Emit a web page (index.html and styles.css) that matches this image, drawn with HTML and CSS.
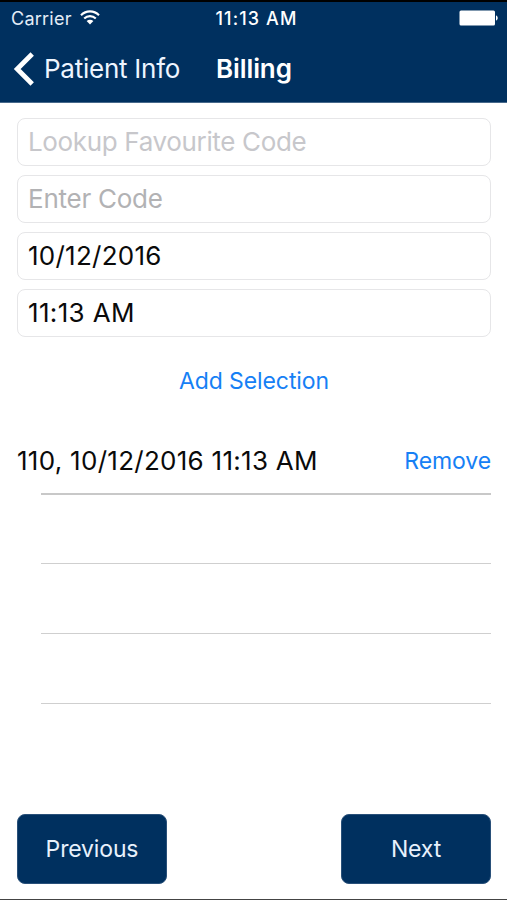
FILE: index.html
```html
<!DOCTYPE html>
<html lang="en">
<head>
<meta charset="utf-8">
<title>Billing</title>
<link rel="stylesheet" href="styles.css">
</head>
<body>
<div class="screen">
  <header class="header">
    <div class="status">
      <div class="carrier"><span class="carrier-name">Carrier</span>
        <svg class="wifi" width="20" height="15" viewBox="0 0 20 15" fill="none" stroke="#fff" stroke-width="2.1"><path d="M1 5.2C6 .1 14 .1 19 5.2"/><path d="M4.2 8.6C7.5 5.3 12.5 5.3 15.8 8.6"/><path d="M6.6 11C8.6 9.2 11.4 9.2 13.4 11L10 14.4Z" fill="#fff" stroke="none"/></svg>
      </div>
      <span class="clock">11:13 AM</span>
      <svg class="battery" width="39" height="16" viewBox="0 0 39 16" fill="#fff"><rect x=".5" y=".5" width="35.5" height="15" rx="1.5"/><path d="M37 5.5C39.3 6 39.3 10 37 10.5Z"/></svg>
    </div>
    <nav class="nav">
      <a class="back"><svg width="22" height="34" viewBox="0 0 22 34" fill="none" stroke="#fff" stroke-width="4.8"><path d="M19.2 2L4.2 17L19.2 32"/></svg><span class="back-label">Patient Info</span></a>
      <h1 class="title">Billing</h1>
    </nav>
  </header>
  <main class="main">
    <div class="fields">
      <div class="field lookup">Lookup Favourite Code</div>
      <div class="field code">Enter Code</div>
      <div class="field date">10/12/2016</div>
      <div class="field time">11:13 AM</div>
    </div>
    <a class="add"><span>Add Selection</span></a>
    <div class="list">
      <div class="row first"><span class="entry">110, 10/12/2016 11:13 AM</span><a class="remove">Remove</a></div>
      <div class="row second"></div>
      <div class="row"></div>
      <div class="row"></div>
    </div>
  </main>
  <footer class="footer">
    <button class="button previous"><span>Previous</span></button>
    <button class="button next"><span>Next</span></button>
  </footer>
</div>
</body>
</html>
```
FILE: styles.css
```css
* { box-sizing: border-box; }
body { margin: 0; background: #fff; font-family: Inter, "Liberation Sans", sans-serif; color: #0a0a0a; }
.screen { height: 900px; display: flex; flex-direction: column; border-bottom: 1px solid #444; white-space: nowrap; overflow: hidden; }
.header { height: 103px; background: #00305f; border-top: 2px solid #000; border-bottom: 1px solid #47698b; color: #fff; }
.status { height: 32px; display: grid; grid-template-columns: 1fr auto 1fr; align-items: center; padding: 1px 9px 0 11px; font-size: 18px; line-height: 31px; }
.carrier { display: flex; align-items: center; gap: 8px; color: #e4edf7; letter-spacing: .25px; }
.wifi { margin-top: -2px; }
.clock { font-weight: 500; font-size: 18px; letter-spacing: 1.1px; padding-left: 4px; }
.battery { justify-self: end; margin-top: -1px; }
.nav { height: 68px; display: flex; align-items: center; padding: 1px 0 0 13px; font-size: 26px; line-height: 67px; }
.back { display: flex; align-items: center; gap: 9px; width: 203px; color: #eef5ff; letter-spacing: -.25px; }
.title { margin: 0; font-size: 26px; font-weight: 600; letter-spacing: -.1px; }
.main { padding: 15px 16px 0 17px; }
.fields { display: grid; grid-auto-rows: 48px; row-gap: 9px; }
.field { border: 1px solid #e6e6e8; border-radius: 8px; padding-left: 10px; font-size: 26px; line-height: 46px; }
.lookup { color: #c7c7cb; letter-spacing: -.35px; }
.code { color: #b2b2b4; letter-spacing: -.25px; }
.date { letter-spacing: .25px; }
.time { letter-spacing: .35px; }
.add { display: block; margin-top: 27px; height: 34px; line-height: 34px; text-align: center; font-size: 23px; letter-spacing: -.1px; color: #1680f5; }
.list { margin-top: 27px; }
.row { height: 70px; margin-left: 24px; border-bottom: 1px solid #cfcfcf; }
.row.first { height: 70px; margin-left: 0; padding-top: 1px; display: flex; justify-content: space-between; align-items: center; border: 0; background: linear-gradient(#c8c8c8, #c8c8c8) 24px 100% / 100% 2px no-repeat; }
.row.second { height: 69px; }
.entry { font-size: 26px; letter-spacing: .28px; }
.remove { font-size: 23px; letter-spacing: -.1px; color: #1680f5; }
.footer { margin: auto 16px 15px 17px; display: flex; justify-content: space-between; }
.button { width: 150px; height: 70px; padding: 0; border: 1px solid #295079; border-radius: 8px; background: #00305f; color: #e8f1fc; font: 23px Inter, "Liberation Sans", sans-serif; letter-spacing: -.15px; }
```
